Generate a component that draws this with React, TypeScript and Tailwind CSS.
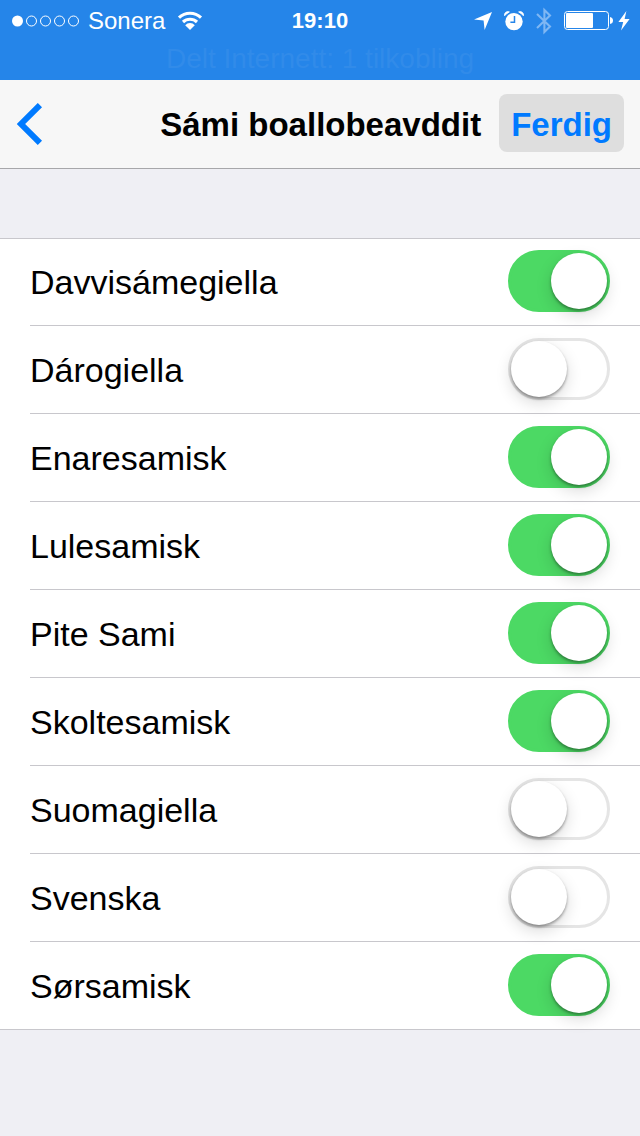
import { useState } from "react";

type Keyboard = { id: string; name: string; enabled: boolean };

const initialKeyboards: Keyboard[] = [
  { id: "sme", name: "Davvisámegiella", enabled: true },
  { id: "nb", name: "Dárogiella", enabled: false },
  { id: "smn", name: "Enaresamisk", enabled: true },
  { id: "smj", name: "Lulesamisk", enabled: true },
  { id: "sje", name: "Pite Sami", enabled: true },
  { id: "sms", name: "Skoltesamisk", enabled: true },
  { id: "fi", name: "Suomagiella", enabled: false },
  { id: "sv", name: "Svenska", enabled: false },
  { id: "sma", name: "Sørsamisk", enabled: true },
];

function SignalDots() {
  return (
    <svg width="68" height="12" viewBox="0 0 68 12" fill="none" stroke="#fff">
      <circle cx="5.5" cy="6" r="5.5" fill="#fff" stroke="none" />
      {[19.5, 33.5, 47.5, 61.5].map((cx) => (
        <circle key={cx} cx={cx} cy="6" r="5" />
      ))}
    </svg>
  );
}

function WifiIcon() {
  return (
    <svg width="26" height="20" viewBox="0 0 26 20" fill="none" stroke="#fff" strokeWidth="3.1">
      <path d="M2 6.6 A16 16 0 0 1 24 6.6" />
      <path d="M6 11 A10.2 10.2 0 0 1 20 11" />
      <path d="M13 19 L8.2 14.2 A6.5 6.5 0 0 1 17.8 14.2 Z" fill="#fff" stroke="none" />
    </svg>
  );
}

function LocationIcon() {
  return (
    <svg width="18" height="18" viewBox="0 0 18 18" fill="#fff">
      <path d="M18 0 L10.6 18 L9.6 8.6 L0 7.6 Z" />
    </svg>
  );
}

function AlarmIcon() {
  return (
    <svg width="20" height="20" viewBox="0 0 20 20" fill="none">
      <circle cx="10" cy="10.6" r="8.7" fill="#fff" />
      <path d="M0.6 4.8 A3.4 3.4 0 0 1 5.4 0.9 Q2.6 2.2 0.6 4.8 Z" fill="#fff" stroke="#fff" strokeWidth="0.8" />
      <path d="M19.4 4.8 A3.4 3.4 0 0 0 14.6 0.9 Q17.4 2.2 19.4 4.8 Z" fill="#fff" stroke="#fff" strokeWidth="0.8" />
      <path d="M10.5 5 V11.2 H6.4" stroke="#2585e9" strokeWidth="1.5" />
    </svg>
  );
}

function BluetoothIcon() {
  return (
    <svg width="16" height="28" viewBox="0 0 16 28" fill="none" stroke="#7fb7f3" strokeWidth="2.1">
      <path d="M1 7 L14 19.5 L8.4 25 V3 L14 8.5 L1 21" />
    </svg>
  );
}

function BatteryIcon() {
  return (
    <svg width="50" height="20" viewBox="0 0 50 20" fill="none">
      <rect x="0.5" y="0.5" width="44" height="18" rx="3" stroke="#fff" />
      <rect x="2" y="2" width="27" height="15" rx="1" fill="#fff" />
      <path d="M46 6 Q49 6.5 49 9.5 T46 13 Z" fill="#fff" />
    </svg>
  );
}

function BoltIcon() {
  return (
    <svg width="12" height="20" viewBox="0 0 12 20" fill="#fff">
      <path d="M8.4 0 L0.4 11 H5.2 L3 19.6 L11.6 8 H6.6 Z" />
    </svg>
  );
}

function StatusBar() {
  return (
    <div className="h-20 bg-[#2585e9] text-2xl text-white">
      <div className="grid h-[42px] grid-cols-[1fr_auto_1fr] items-center">
        <div className="flex items-center gap-2 pl-3">
          <SignalDots />
          <span>Sonera</span>
          <span className="pl-1">
            <WifiIcon />
          </span>
        </div>
        <time className="text-[22px] font-bold">19:10</time>
        <div className="flex items-center justify-end gap-3 pr-[10px]">
          <LocationIcon />
          <AlarmIcon />
          <BluetoothIcon />
          <div className="flex items-center gap-1">
            <BatteryIcon />
            <BoltIcon />
          </div>
        </div>
      </div>
      <p className="text-center text-[28px] leading-[34px] text-[#318be9]">Delt Internett: 1 tilkobling</p>
    </div>
  );
}

export default function App() {
  const [keyboards, setKeyboards] = useState(initialKeyboards);

  const toggle = (id: string) =>
    setKeyboards((list) => list.map((k) => (k.id === id ? { ...k, enabled: !k.enabled } : k)));

  return (
    <div className="min-h-screen bg-[#efeff4] font-['Liberation_Sans',Arial,sans-serif] text-black">
      <StatusBar />
      <header className="flex items-center justify-between border-b border-[#a7a7aa] bg-[#f7f7f7] px-4 pt-3.5 pb-3 text-[33px]">
        <button type="button" aria-label="Back">
          <svg width="28" height="44" viewBox="0 0 28 44" fill="none" stroke="#007aff" strokeWidth="6">
            <path d="M23.9 2.1 L5 21 L23.9 39.9" />
          </svg>
        </button>
        <div className="flex items-start gap-[18px]">
          <h1 className="leading-[62px] font-bold">Sámi boallobeavddit</h1>
          <button type="button" className="rounded-lg bg-[#dedede] px-3 pt-1 leading-[54px] font-bold text-[#007aff]">
            Ferdig
          </button>
        </div>
      </header>
      <main className="pt-[69px]">
        <ul className="bg-white shadow-[inset_0_1px_0_#c8c7cc]">
          {keyboards.map((k) => (
            <li key={k.id} className="group pl-[30px] last:border-b last:border-[#c8c7cc] last:pl-0">
              <div className="flex h-[88px] items-start justify-between border-b border-[#c8c7cc] pt-3 pr-[30px] group-last:h-[87px] group-last:border-b-0 group-last:pl-[30px]">
                <label htmlFor={k.id} className="text-[34px] leading-[64px]">
                  {k.name}
                </label>
                <input
                  id={k.id}
                  type="checkbox"
                  role="switch"
                  checked={k.enabled}
                  onChange={() => toggle(k.id)}
                  className="flex h-[62px] w-[102px] appearance-none items-center rounded-full border-3 border-[#e5e5e5] bg-white before:size-14 before:rounded-full before:bg-white before:shadow-[0_6px_16px_rgba(0,0,0,0.15),0_2px_3px_rgba(0,0,0,0.35)] before:content-[''] checked:justify-end checked:border-[#4cd964] checked:bg-[#4cd964]"
                />
              </div>
            </li>
          ))}
        </ul>
      </main>
    </div>
  );
}
